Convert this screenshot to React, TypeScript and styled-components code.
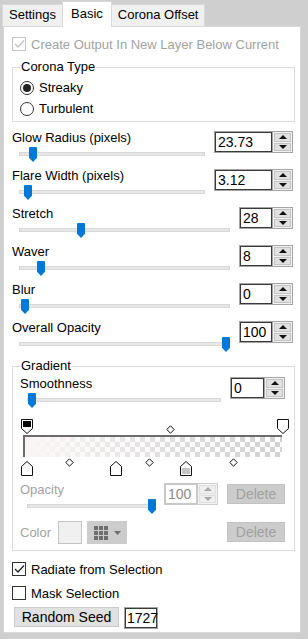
import styled, { createGlobalStyle } from 'styled-components'

const GlobalStyle = createGlobalStyle`
  html, body {
    margin: 0;
    padding: 0;
  }
  body {
    background: #cfcfcf;
    font-family: "Liberation Sans", Arial, sans-serif;
    font-size: 13px;
    color: #000;
  }
  * {
    box-sizing: border-box;
  }
`

const Frame = styled.div`
  width: 308px;
  height: 639px;
  overflow: hidden;
`

const TabBar = styled.div`
  display: flex;
  align-items: flex-end;
  height: 26px;
  padding-left: 3px;
  position: relative;
  z-index: 1;
`

const Tab = styled.div<{ $active?: boolean }>`
  height: ${p => (p.$active ? 26 : 22)}px;
  margin-bottom: ${p => (p.$active ? -1 : 0)}px;
  padding: ${p => (p.$active ? '4px 8px 0' : '2px 6px 0')};
  line-height: 16px;
  background: ${p => (p.$active ? '#fff' : '#f0f0f0')};
  border: 1px solid #d9d9d9;
  border-bottom: none;
  margin-left: -1px;
  white-space: nowrap;
`

const Panel = styled.div`
  width: 298px;
  height: 607px;
  margin-left: 3px;
  padding: 7px 5px 0 8px;
  background: #fff;
  border: 1px solid #d9d9d9;
`

const CheckRow = styled.label<{ $disabled?: boolean; $h?: number }>`
  display: flex;
  align-items: center;
  gap: 5px;
  height: ${p => p.$h ?? 20}px;
  color: ${p => (p.$disabled ? '#a2a2a2' : '#000')};
  white-space: nowrap;
`

const Box = styled.span<{ $disabled?: boolean }>`
  display: flex;
  align-items: center;
  justify-content: center;
  width: 14px;
  height: 14px;
  border: 1px solid ${p => (p.$disabled ? '#c4c4c4' : '#333')};
  background: #fff;
  flex: none;
`

const Group = styled.fieldset<{ $top?: number }>`
  margin: ${p => p.$top ?? 0}px 0 0;
  padding: 2px 9px 2px 7px;
  border: 1px solid #dcdcdc;
  min-width: 0;
`

const Legend = styled.legend`
  padding: 0 1px;
  line-height: 16px;
  font-size: 13px;
`

const RadioRow = styled.label`
  display: flex;
  align-items: center;
  gap: 5px;
  height: 21px;
`

const RadioDot = styled.span<{ $on?: boolean }>`
  display: flex;
  align-items: center;
  justify-content: center;
  width: 14px;
  height: 14px;
  border-radius: 50%;
  border: 1px solid #333;
  background: #fff;

  &::after {
    content: '';
    display: ${p => (p.$on ? 'block' : 'none')};
    width: 8px;
    height: 8px;
    border-radius: 50%;
    background: #222;
  }
`

const SliderList = styled.div`
  margin-top: 8px;
  padding-right: 2px;
`

const Section = styled.div`
  display: grid;
  grid-template-columns: 1fr auto auto;
  grid-template-rows: 16px 22px;
  height: 38px;
`

const Label = styled.div<{ $disabled?: boolean }>`
  grid-column: 1;
  grid-row: 1;
  line-height: 16px;
  white-space: nowrap;
  color: ${p => (p.$disabled ? '#a2a2a2' : '#000')};
`

const Slider = styled.div`
  grid-column: 1;
  grid-row: 2;
  position: relative;
  height: 16px;
  margin: 0 9px 0 7px;
  padding-top: 6px;
`

const Track = styled.div`
  height: 4px;
  background: #e7e7e7;
  border: 1px solid #d8d8d8;
`

const Thumb = styled.div<{ $at: number }>`
  position: absolute;
  top: 1px;
  left: ${p => p.$at}px;
  width: 8px;
  height: 15px;
  background: #0078d7;
  border-radius: 1px 1px 0 0;
  clip-path: polygon(0 0, 100% 0, 100% 72%, 50% 100%, 0 72%);
`

const Spin = styled.div`
  grid-column: 2;
  grid-row: 1 / span 2;
  align-self: start;
  margin-top: 1px;
  display: flex;
  height: 22px;
`

const Field = styled.div<{ $w: number; $disabled?: boolean }>`
  width: ${p => p.$w}px;
  height: 100%;
  padding: 2px 0 0 3px;
  line-height: 16px;
  font-size: 14px;
  border: 1px solid ${p => (p.$disabled ? '#c8c8c8' : '#a5a5a5')};
  box-shadow: inset 0 0 0 1px ${p => (p.$disabled ? '#c8c8c8' : '#3a3a3a')};
  color: ${p => (p.$disabled ? '#8a8a8a' : '#000')};
  background: #fff;
`

const Arrows = styled.div<{ $disabled?: boolean }>`
  display: flex;
  flex-direction: column;
  width: 20px;
  height: 100%;
  border: 1px solid ${p => (p.$disabled ? '#d0d0d0' : '#a5a5a5')};
  border-left: none;
  background: #f2f2f2;
  padding: 1px;
  gap: 1px;
`

const ArrowBtn = styled.div<{ $disabled?: boolean }>`
  flex: 1;
  display: flex;
  align-items: center;
  justify-content: center;
  background: ${p => (p.$disabled ? '#efefef' : '#e1e1e1')};
  border: 1px solid ${p => (p.$disabled ? '#e0e0e0' : '#c4c4c4')};
`

const GrayButton = styled.div<{ $top?: number }>`
  grid-column: 3;
  grid-row: 1 / span 2;
  align-self: start;
  margin: ${p => p.$top ?? 0}px 0 0 9px;
  width: 58px;
  height: 20px;
  line-height: 18px;
  text-align: center;
  font-size: 14px;
  color: #a0a0a0;
  background: #cccccc;
  border: 1px solid #c2c2c2;
`

const Editor = styled.div`
  position: relative;
  height: 64px;
  width: 259px;
  margin-left: 3px;
  padding-top: 21px;
`

const GradientBar = styled.div`
  height: 22px;
  border-top: 2px solid #6c6c6c;
  border-left: 2px solid #6c6c6c;
  background:
    linear-gradient(to right, rgba(250, 246, 246, 1) 0%, rgba(250, 246, 246, 0.35) 55%, rgba(250, 246, 246, 0) 100%),
    repeating-conic-gradient(#d2d2d2 0 25%, #fff 0 50%) 0 0 / 10px 10px;
`

const Marker = styled.div<{ $x: number; $y: number }>`
  position: absolute;
  left: ${p => p.$x}px;
  top: ${p => p.$y}px;
  display: flex;
`

const Gap = styled.div<{ $h: number }>`
  height: ${p => p.$h}px;
`

const ColorRow = styled.div`
  display: flex;
  align-items: center;
  height: 23px;
  margin-top: 1px;
`

const ColorLabel = styled.div`
  width: 38px;
  color: #a2a2a2;
`

const Swatch = styled.div`
  width: 24px;
  height: 23px;
  background: #f0f0f0;
  border: 1px solid #c4c4c4;
`

const GridButton = styled.div`
  display: flex;
  align-items: center;
  gap: 6px;
  width: 40px;
  height: 23px;
  margin-left: 5px;
  padding-left: 7px;
  background: #cccccc;
`

const RowDelete = styled(GrayButton)`
  margin: 1px 0 0 auto;
`

const SeedRow = styled.div`
  display: flex;
  align-items: flex-start;
  gap: 5px;
  margin-top: 2px;
  padding-left: 2px;
`

const SeedButton = styled.div`
  width: 105px;
  height: 20px;
  line-height: 18px;
  text-align: center;
  font-size: 14px;
  background: #e1e1e1;
  border: 1px solid #cbcbcb;
`

const SeedField = styled(Field)`
  height: 22px;
  padding-left: 2px;
`

function Check({ disabled }: { disabled?: boolean }) {
  return (
    <Box $disabled={disabled}>
      <svg width="11" height="10" viewBox="0 0 11 10">
        <polyline
          points="1,5 4,8 10,1.5"
          fill="none"
          stroke={disabled ? '#c4c4c4' : '#222'}
          strokeWidth="1.3"
        />
      </svg>
    </Box>
  )
}

function SpinBox({ value, w, disabled }: { value: string; w: number; disabled?: boolean }) {
  const c = disabled ? '#a8a8a8' : '#111'
  return (
    <Spin>
      <Field $w={w} $disabled={disabled}>{value}</Field>
      <Arrows $disabled={disabled}>
        <ArrowBtn $disabled={disabled}>
          <svg width="8" height="4" viewBox="0 0 8 4"><path d="M0 4 L4 0 L8 4 Z" fill={c} /></svg>
        </ArrowBtn>
        <ArrowBtn $disabled={disabled}>
          <svg width="8" height="4" viewBox="0 0 8 4"><path d="M0 0 L8 0 L4 4 Z" fill={c} /></svg>
        </ArrowBtn>
      </Arrows>
    </Spin>
  )
}

type SliderProps = {
  label: string
  value: string
  thumb: number
  w: number
  disabled?: boolean
  extra?: React.ReactNode
}

function SliderSection({ label, value, thumb, w, disabled, extra }: SliderProps) {
  return (
    <Section>
      <Label $disabled={disabled}>{label}</Label>
      <Slider>
        <Track />
        <Thumb $at={thumb} />
      </Slider>
      <SpinBox value={value} w={w} disabled={disabled} />
      {extra}
    </Section>
  )
}

function TopStop({ x, dark }: { x: number; dark?: boolean }) {
  return (
    <Marker $x={x} $y={5}>
      <svg width="12" height="15" viewBox="0 0 12 15">
        <path d="M0.5 0.5 H11.5 V9.5 L6 14.5 L0.5 9.5 Z" fill="#fff" stroke="#111" />
        {dark && <rect x="2" y="2" width="8" height="6" fill="#000" />}
      </svg>
    </Marker>
  )
}

function BottomStop({ x, fill }: { x: number; fill?: string }) {
  return (
    <Marker $x={x} $y={47}>
      <svg width="12" height="15" viewBox="0 0 12 15">
        <path d="M6 0.5 L11.5 5.5 V14.5 H0.5 V5.5 Z" fill="#fff" stroke="#111" />
        {fill && <rect x="2" y="7" width="8" height="6" fill={fill} />}
      </svg>
    </Marker>
  )
}

function Diamond({ x, y }: { x: number; y: number }) {
  return (
    <Marker $x={x} $y={y}>
      <svg width="9" height="9" viewBox="0 0 9 9">
        <path d="M4.5 0.8 L8.2 4.5 L4.5 8.2 L0.8 4.5 Z" fill="#fff" stroke="#111" />
      </svg>
    </Marker>
  )
}

function GridIcon() {
  const cells = []
  for (let r = 0; r < 3; r++) {
    for (let c = 0; c < 3; c++) {
      cells.push(<rect key={`${r}${c}`} x={c * 5} y={r * 5} width="4" height="4" fill="#6f6f6f" />)
    }
  }
  return <svg width="14" height="14" viewBox="0 0 14 14">{cells}</svg>
}

export default function App() {
  return (
    <Frame>
      <GlobalStyle />
      <TabBar>
        <Tab>Settings</Tab>
        <Tab $active>Basic</Tab>
        <Tab>Corona Offset</Tab>
      </TabBar>
      <Panel>
        <CheckRow $disabled>
          <Check disabled />
          Create Output In New Layer Below Current
        </CheckRow>

        <Group $top={5}>
          <Legend>Corona Type</Legend>
          <RadioRow>
            <RadioDot $on />
            Streaky
          </RadioRow>
          <RadioRow>
            <RadioDot />
            Turbulent
          </RadioRow>
        </Group>

        <SliderList>
          <SliderSection label="Glow Radius (pixels)" value="23.73" thumb={10} w={59} />
          <SliderSection label="Flare Width (pixels)" value="3.12" thumb={5} w={59} />
          <SliderSection label="Stretch" value="28" thumb={58} w={34} />
          <SliderSection label="Waver" value="8" thumb={18} w={34} />
          <SliderSection label="Blur" value="0" thumb={2} w={34} />
          <SliderSection label="Overall Opacity" value="100" thumb={203} w={34} />
        </SliderList>

        <Group>
          <Legend>Gradient</Legend>
          <SliderSection label="Smoothness" value="0" thumb={1} w={35} />
          <Editor>
            <GradientBar />
            <TopStop x={-2} dark />
            <Diamond x={143} y={11} />
            <TopStop x={254} />
            <BottomStop x={-2} />
            <Diamond x={42} y={44} />
            <BottomStop x={87} />
            <Diamond x={122} y={44} />
            <BottomStop x={157} fill="#c4c4c4" />
            <Diamond x={206} y={44} />
          </Editor>
          <Gap $h={4} />
          <SliderSection
            label="Opacity"
            value="100"
            thumb={121}
            w={34}
            disabled
            extra={<GrayButton $top={2}>Delete</GrayButton>}
          />
          <ColorRow>
            <ColorLabel>Color</ColorLabel>
            <Swatch />
            <GridButton>
              <GridIcon />
              <svg width="7" height="4" viewBox="0 0 7 4"><path d="M0 0 H7 L3.5 4 Z" fill="#6f6f6f" /></svg>
            </GridButton>
            <RowDelete>Delete</RowDelete>
          </ColorRow>
          <Gap $h={4} />
        </Group>

        <CheckRow $h={24} style={{ marginTop: 6 }}>
          <Check />
          Radiate from Selection
        </CheckRow>
        <CheckRow $h={24}>
          <Box />
          Mask Selection
        </CheckRow>
        <SeedRow>
          <SeedButton>Random Seed</SeedButton>
          <SeedField $w={34}>1727</SeedField>
        </SeedRow>
      </Panel>
    </Frame>
  )
}
